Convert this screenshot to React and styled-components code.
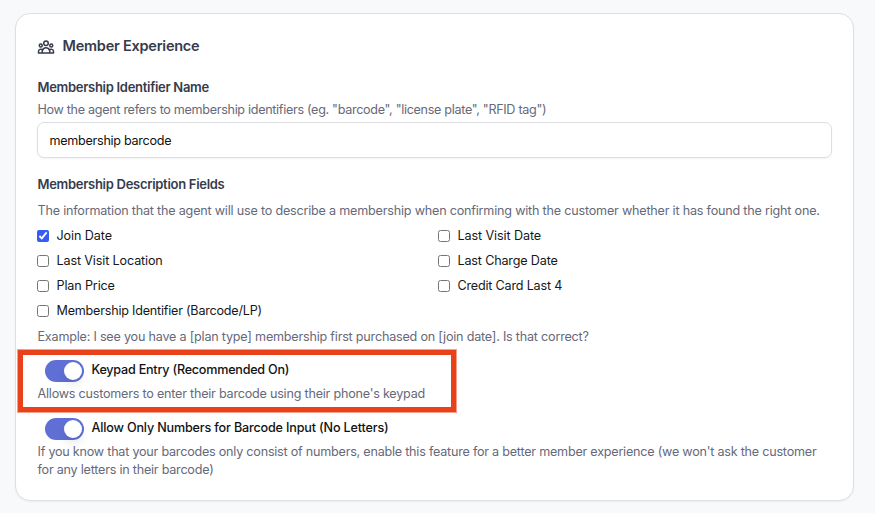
import styled, { createGlobalStyle } from "styled-components";
import { HiOutlineUserGroup } from "react-icons/hi";

const FIELDS = [
  { label: "Join Date", checked: true, spacing: -0.1 },
  { label: "Last Visit Date", spacing: -0.1 },
  { label: "Last Visit Location", spacing: -0.14 },
  { label: "Last Charge Date", spacing: -0.17 },
  { label: "Plan Price", spacing: -0.14 },
  { label: "Credit Card Last 4", spacing: -0.2 },
  { label: "Membership Identifier (Barcode/LP)", spacing: -0.22 },
];

export default function App() {
  return (
    <>
      <GlobalStyle />
      <Page>
        <Card>
          <Header>
            <HiOutlineUserGroup size={18} />
            <Title>Member Experience</Title>
          </Header>

          <Label>Membership Identifier Name</Label>
          <Hint $top={5} $spacing={-0.31}>
            How the agent refers to membership identifiers (eg. "barcode", "license plate", "RFID tag")
          </Hint>
          <TextInput defaultValue="membership barcode" />

          <Label>Membership Description Fields</Label>
          <Hint $top={9} $spacing={-0.202}>
            The information that the agent will use to describe a membership when confirming with the customer whether it has found the right one.
          </Hint>
          <FieldGrid>
            {FIELDS.map((field) => (
              <Field key={field.label} $spacing={field.spacing}>
                <Checkbox type="checkbox" defaultChecked={field.checked} />
                <span>{field.label}</span>
              </Field>
            ))}
          </FieldGrid>
          <Hint $top={5} $spacing={-0.21}>
            Example: I see you have a [plan type] membership first purchased on [join date]. Is that correct?
          </Hint>

          <Setting $top={14}>
            <Highlight />
            <SwitchRow>
              <Switch role="switch" aria-checked="true"><Thumb /></Switch>
              <SwitchLabel $spacing={-0.23}>Keypad Entry (Recommended On)</SwitchLabel>
            </SwitchRow>
            <Hint $top={3} $spacing={-0.22}>
              Allows customers to enter their barcode using their phone's keypad
            </Hint>
          </Setting>

          <Setting $top={15}>
            <SwitchRow>
              <Switch role="switch" aria-checked="true"><Thumb /></Switch>
              <SwitchLabel $spacing={-0.17}>Allow Only Numbers for Barcode Input (No Letters)</SwitchLabel>
            </SwitchRow>
            <Hint $top={3} $spacing={-0.227}>
              If you know that your barcodes only consist of numbers, enable this feature for a better member experience (we won't ask the customer<br />
              for any letters in their barcode)
            </Hint>
          </Setting>
        </Card>
      </Page>
    </>
  );
}

const GlobalStyle = createGlobalStyle`
  body {
    margin: 0;
    background: #f8f9fb;
    font-family: Inter, "Liberation Sans", sans-serif;
  }
`;

const Page = styled.main`
  box-sizing: border-box;
  height: 513px;
  padding: 13px 21px 12px 15px;
  overflow: hidden;
`;

const Card = styled.section`
  box-sizing: border-box;
  height: 488px;
  padding: 22px 21px;
  background: #fff;
  border: 1px solid #dcdfe3;
  border-radius: 15px;
  box-shadow: 0 1px 2px rgba(0, 0, 0, 0.05);
`;

const Header = styled.header`
  display: flex;
  align-items: center;
  gap: 7.5px;
  height: 21px;
  margin-bottom: 21px;
  color: #363b4d;
`;

const Title = styled.h2`
  margin: -1px 0 0;
  font-size: 14.5px;
  font-weight: 600;
  line-height: 20px;
  letter-spacing: -0.23px;
`;

const Label = styled.h3`
  margin: 0;
  padding-left: 0.5px;
  font-size: 13px;
  font-weight: 600;
  line-height: 18px;
  letter-spacing: -0.29px;
  color: #363b4d;
`;

const Hint = styled.p`
  margin: ${({ $top }) => $top}px 0 0;
  padding-left: 0.5px;
  font-size: 12.6px;
  line-height: 18px;
  letter-spacing: ${({ $spacing }) => $spacing}px;
  color: #666979;
  white-space: nowrap;
`;

const TextInput = styled.input`
  display: block;
  box-sizing: border-box;
  width: 795px;
  height: 36px;
  margin: 3px 0 17px;
  padding: 0 11.5px;
  border: 1px solid #dcdee1;
  border-radius: 7px;
  box-shadow: 0 1px 2px rgba(0, 0, 0, 0.05);
  font: 12.6px Inter, "Liberation Sans", sans-serif;
  letter-spacing: -0.28px;
  color: #111;
`;

const FieldGrid = styled.div`
  display: grid;
  grid-template-columns: 401px 1fr;
  grid-auto-rows: 25px;
  margin-top: 3px;
`;

const Field = styled.label`
  display: flex;
  align-items: center;
  gap: 7.5px;
  font-size: 12.6px;
  letter-spacing: ${({ $spacing }) => $spacing}px;
  color: #16171a;
`;

const Checkbox = styled.input`
  width: 12px;
  height: 12px;
  margin: 0;
  accent-color: #355cf5;
`;

const Setting = styled.div`
  position: relative;
  margin-top: ${({ $top }) => $top}px;
`;

/* Callout frame drawn around the keypad option */
const Highlight = styled.div`
  position: absolute;
  top: -10px;
  left: -19px;
  box-sizing: border-box;
  width: 438px;
  height: 62px;
  border: 5px solid #e9421b;
  box-shadow: 0 0 0 1px rgba(233, 66, 27, 0.5);
  pointer-events: none;
`;

const SwitchRow = styled.div`
  display: flex;
  align-items: center;
  gap: 7.5px;
  height: 22px;
  padding-left: 8px;
`;

const Switch = styled.button`
  display: flex;
  align-items: center;
  justify-content: flex-end;
  box-sizing: border-box;
  width: 39px;
  height: 22px;
  padding: 0 2px;
  border: 0;
  border-radius: 11px;
  background: #5f6fd6;
`;

const Thumb = styled.span`
  width: 18px;
  height: 18px;
  border-radius: 50%;
  background: #fff;
  box-shadow: 0 6px 8px rgba(0, 0, 0, 0.08);
`;

const SwitchLabel = styled.span`
  margin-top: -2px;
  font-size: 12.6px;
  font-weight: 500;
  line-height: 18px;
  letter-spacing: ${({ $spacing }) => $spacing}px;
  color: #111214;
`;
